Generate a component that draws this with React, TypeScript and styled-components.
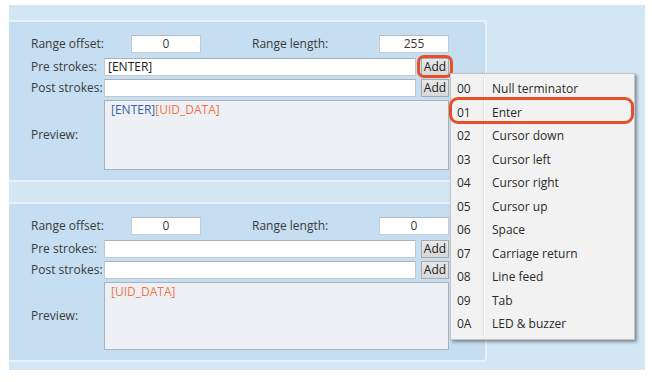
import React from "react";
import styled, { createGlobalStyle } from "styled-components";

const GlobalStyle = createGlobalStyle`
  body {
    margin: 0;
    background: #ffffff;
    font-family: "Open Sans", "Noto Sans", sans-serif;
  }
`;

const Frame = styled.div`
  position: relative;
  margin: 5px 7px 0 9px;
  height: 365px;
  padding-top: 15px;
  box-sizing: border-box;
  background: #d2e6f4;
  display: flex;
  flex-direction: column;
  gap: 20px;
  font-size: 12px;
  color: #3a3a3a;
`;

const Panel = styled.div`
  width: 478px;
  box-sizing: border-box;
  background: #c6def1;
  border: 2px solid #e6f1fa;
  border-left: none;
  border-radius: 0 4px 4px 0;
  padding: 13px 0 10px 22px;
  display: flex;
  flex-direction: column;
  gap: 3px;
`;

const Row = styled.div<{ $gapBelow?: number }>`
  display: flex;
  align-items: center;
  height: 18px;
  width: 418px;
  margin-bottom: ${({ $gapBelow }) => $gapBelow ?? 0}px;
`;

const Label = styled.span<{ $width: number; $offset?: number }>`
  width: ${({ $width }) => $width}px;
  margin-left: ${({ $offset }) => $offset ?? 0}px;
  flex-shrink: 0;
  white-space: nowrap;
  line-height: 18px;
`;

const NumberBox = styled.div<{ $width: number }>`
  width: ${({ $width }) => $width}px;
  height: 18px;
  box-sizing: border-box;
  background: #ffffff;
  border: 1px solid #c6ccd3;
  border-top-color: #b4bac2;
  text-align: center;
  line-height: 16px;
`;

const TextBox = styled.div`
  flex: 1;
  height: 18px;
  box-sizing: border-box;
  background: #ffffff;
  border: 1px solid #c2c8cf;
  border-top-color: #aab0b8;
  padding-left: 3px;
  line-height: 16px;
  color: #222;
`;

const AddButton = styled.div`
  width: 28px;
  height: 18px;
  margin-left: 5px;
  box-sizing: border-box;
  background: linear-gradient(#e8e8e8, #d8d8d8);
  border: 1px solid #a9a9a9;
  text-align: center;
  line-height: 15px;
  color: #222;
`;

const PreviewRow = styled.div<{ $height: number }>`
  display: flex;
  align-items: center;
  width: 418px;
  height: ${({ $height }) => $height}px;
`;

const PreviewBox = styled.div`
  flex: 1;
  height: 100%;
  box-sizing: border-box;
  background: #edf1f6;
  border: 1px solid #a9b1ba;
  padding: 0 6px;
  line-height: 17px;
`;

const Token = styled.span<{ $kind: "key" | "data" }>`
  color: ${({ $kind }) => ($kind === "key" ? "#3462a8" : "#ee7648")};
`;

const Menu = styled.div`
  position: absolute;
  left: 441px;
  top: 68px;
  width: 185px;
  padding: 3px 0;
  box-sizing: border-box;
  background: #f2f2f2;
  border: 1px solid #c4c4c4;
  box-shadow: 2px 2px 3px rgba(0, 0, 0, 0.4);
  color: #2a2a2a;
  font-size: 12px;
`;

const MenuItem = styled.div`
  display: grid;
  grid-template-columns: 33px 1fr;
  height: 23.5px;
  align-items: center;
`;

const Code = styled.span`
  padding-left: 6px;
  height: 100%;
  display: flex;
  align-items: center;
  border-right: 1px solid #e0e0e0;
  box-shadow: 1px 0 0 #ffffff;
`;

const ItemText = styled.span`
  padding-left: 8px;
`;

const Highlight = styled.div<{ $x: number; $y: number; $w: number; $h: number; $r: number }>`
  position: absolute;
  left: ${({ $x }) => $x}px;
  top: ${({ $y }) => $y}px;
  width: ${({ $w }) => $w}px;
  height: ${({ $h }) => $h}px;
  box-sizing: border-box;
  border: 3px solid #e5502b;
  border-radius: ${({ $r }) => $r}px;
`;

const menuItems: [string, string][] = [
  ["00", "Null terminator"],
  ["01", "Enter"],
  ["02", "Cursor down"],
  ["03", "Cursor left"],
  ["04", "Cursor right"],
  ["05", "Cursor up"],
  ["06", "Space"],
  ["07", "Carriage return"],
  ["08", "Line feed"],
  ["09", "Tab"],
  ["0A", "LED & buzzer"],
];

interface StrokePanelProps {
  length: string;
  pre: string;
  previewHeight: number;
}

const StrokePanel: React.FC<StrokePanelProps> = ({ length, pre, previewHeight }) => (
  <Panel>
    <Row $gapBelow={2}>
      <Label $width={100}>Range offset:</Label>
      <NumberBox $width={70}>0</NumberBox>
      <Label $width={127} $offset={51}>Range length:</Label>
      <NumberBox $width={70}>{length}</NumberBox>
    </Row>
    <Row>
      <Label $width={73}>Pre strokes:</Label>
      <TextBox>{pre}</TextBox>
      <AddButton>Add</AddButton>
    </Row>
    <Row>
      <Label $width={73}>Post strokes:</Label>
      <TextBox />
      <AddButton>Add</AddButton>
    </Row>
    <PreviewRow $height={previewHeight}>
      <Label $width={73}>Preview:</Label>
      <PreviewBox>
        {pre && <Token $kind="key">{pre}</Token>}
        <Token $kind="data">[UID_DATA]</Token>
      </PreviewBox>
    </PreviewRow>
  </Panel>
);

export default function App() {
  return (
    <>
      <GlobalStyle />
      <Frame>
        <StrokePanel length="255" pre="[ENTER]" previewHeight={70} />
        <StrokePanel length="0" pre="" previewHeight={68} />
        <Highlight $x={408} $y={50} $w={36} $h={23} $r={7} />
        <Menu>
          {menuItems.map(([code, text]) => (
            <MenuItem key={code}>
              <Code>{code}</Code>
              <ItemText>{text}</ItemText>
            </MenuItem>
          ))}
        </Menu>
        <Highlight $x={440} $y={92} $w={185} $h={27} $r={9} />
      </Frame>
    </>
  );
}
